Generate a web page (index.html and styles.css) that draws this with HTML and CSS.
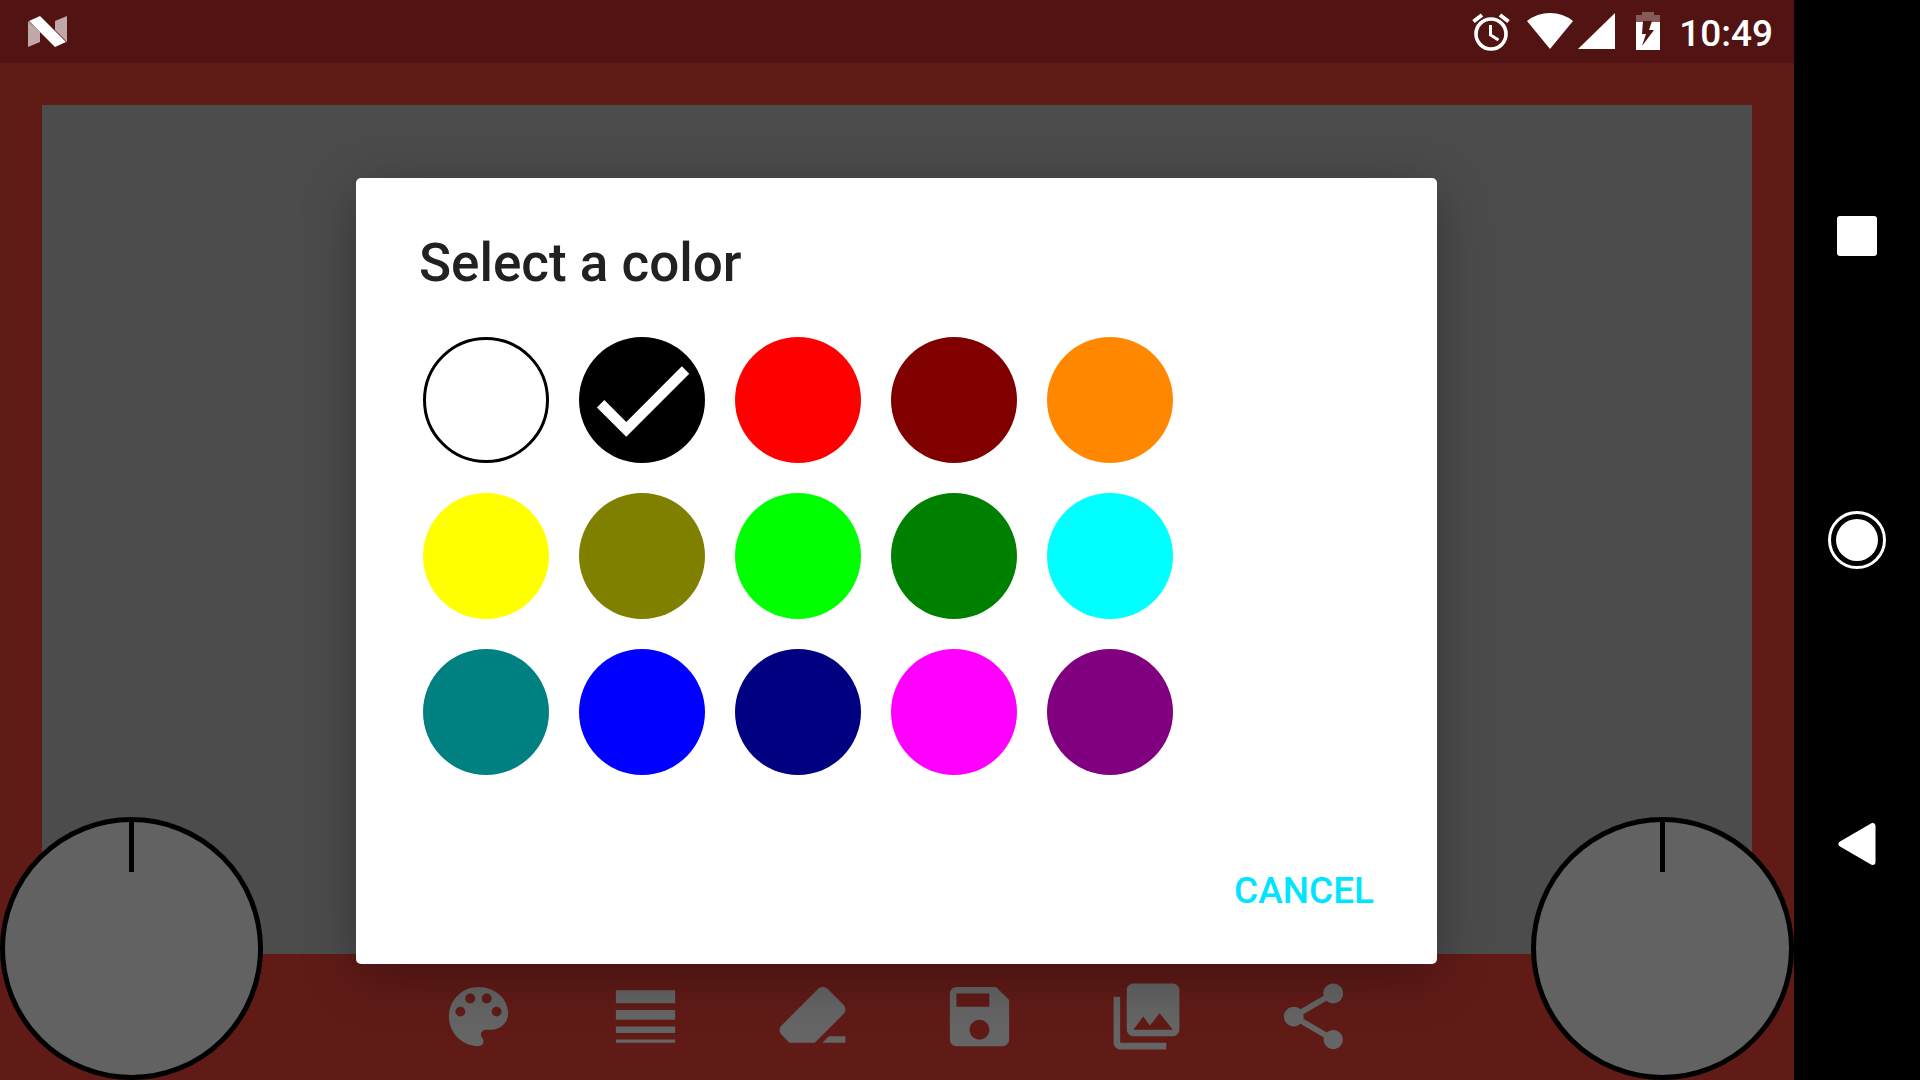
FILE: index.html
```html
<!DOCTYPE html>
<html lang="en">
<head>
<meta charset="utf-8">
<meta name="viewport" content="width=device-width, initial-scale=1">
<title>Select a color</title>
<link rel="stylesheet" href="styles.css">
</head>
<body>
<div class="device">
  <div class="app">
    <header class="status-bar">
      <svg class="logo" viewBox="0 0 39 31" aria-hidden="true">
        <path class="fold" d="M0 5 12 16V26L0 31ZM27 5 39 0V26L27 14Z"/>
        <path d="M1 5 12 0 38 26 27 31Z"/>
      </svg>
      <div class="indicators">
        <svg class="alarm" viewBox="0 0 38 39" aria-hidden="true">
          <circle cx="19" cy="22" r="15" fill="none" stroke="#fff" stroke-width="3.6"/>
          <path d="M18.5 13v10l8 5" fill="none" stroke="#fff" stroke-width="3"/>
          <path d="M1.5 9.5 10 3M28 3l8.500 6.500" fill="none" stroke="#fff" stroke-width="4"/>
        </svg>
        <svg class="wifi" viewBox="0 0 46 39" aria-hidden="true">
          <path d="M0 9Q10 1 23 1T46 9L23 37Z"/>
        </svg>
        <svg class="cell" viewBox="0 0 37 39" aria-hidden="true">
          <path d="M37 1V37H0Z"/>
        </svg>
        <svg class="battery" viewBox="0 0 24 39" aria-hidden="true">
          <path class="battery-empty" d="M6 0H18V3H24V10H0V3H6Z"/>
          <path d="M0 10H24V38H0Z"/>
          <path class="battery-bolt" d="M7 9H16L13 18H18L6 34 10 22H6Z"/>
        </svg>
        <time class="clock" datetime="10:49">10:49</time>
      </div>
    </header>

    <main class="canvas"></main>

    <footer class="toolbar">
      <button class="knob knob-left" type="button" aria-label="Horizontal knob"></button>
      <button class="tool" type="button" aria-label="Color"><svg viewBox="0 0 24 24"><path d="M12 3c-4.970 0-9 4.030-9 9s4.030 9 9 9c.83 0 1.500-.67 1.500-1.500 0-.39-.15-.74-.39-1.010-.23-.26-.38-.61-.38-.99 0-.83.67-1.500 1.500-1.500H16c2.760 0 5-2.240 5-5 0-4.420-4.030-8-9-8zm-5.500 9c-.83 0-1.500-.67-1.500-1.500S5.670 9 6.500 9 8 9.670 8 10.500 7.330 12 6.500 12zm3-4C8.670 8 8 7.330 8 6.500S8.670 5 9.500 5s1.500.67 1.500 1.500S10.330 8 9.500 8zm5 0c-.83 0-1.500-.67-1.500-1.500S13.670 5 14.500 5s1.500.67 1.500 1.500S15.330 8 14.500 8zm3 4c-.83 0-1.500-.67-1.500-1.500S16.670 9 17.500 9s1.500.67 1.500 1.500-.67 1.500-1.500 1.500z"/></svg></button>
      <button class="tool" type="button" aria-label="Line width"><svg viewBox="0 0 24 24"><path d="M3 4h18v4H3zM3 10h18v3H3zM3 15h18v2H3zM3 19h18v1H3z"/></svg></button>
      <button class="tool" type="button" aria-label="Erase"><svg viewBox="0 0 24 24"><path d="M15.140 3c-.51 0-1.020.2-1.410.59L2.590 14.730c-.78.77-.78 2.040 0 2.830L5.030 20h7.660l8.720-8.730c.79-.77.79-2.040 0-2.830l-4.850-4.850c-.39-.39-.91-.59-1.420-.59M17 18l-2 2h7v-2"/></svg></button>
      <button class="tool" type="button" aria-label="Save"><svg viewBox="0 0 24 24"><path d="M17 3H5c-1.110 0-2 .9-2 2v14c0 1.100.89 2 2 2h14c1.100 0 2-.9 2-2V7l-4-4zm-5 16c-1.660 0-3-1.340-3-3s1.340-3 3-3 3 1.340 3 3-1.340 3-3 3zm3-10H5V5h10v4z"/></svg></button>
      <button class="tool" type="button" aria-label="Gallery"><svg viewBox="0 0 24 24"><path d="M22 16V4a2 2 0 0 0-2-2H8a2 2 0 0 0-2 2v12a2 2 0 0 0 2 2h12a2 2 0 0 0 2-2M11 12l2.030 2.710L16 11l4 5H8M2 6v14a2 2 0 0 0 2 2h14v-2H4V6"/></svg></button>
      <button class="tool" type="button" aria-label="Share"><svg viewBox="0 0 24 24"><path d="M18 16.080c-.76 0-1.440.3-1.960.77L8.910 12.700c.05-.23.09-.46.09-.7s-.04-.47-.09-.7l7.050-4.110c.54.5 1.250.81 2.040.81 1.660 0 3-1.340 3-3s-1.340-3-3-3-3 1.340-3 3c0 .24.04.47.09.7L8.040 9.810C7.500 9.310 6.790 9 6 9c-1.660 0-3 1.340-3 3s1.340 3 3 3c.79 0 1.500-.31 2.040-.81l7.120 4.160c-.05.21-.08.43-.08.65 0 1.610 1.310 2.920 2.920 2.920s2.920-1.310 2.920-2.920-1.310-2.920-2.920-2.920z"/></svg></button>
      <button class="knob knob-right" type="button" aria-label="Vertical knob"></button>
    </footer>

    <div class="overlay">
      <section class="dialog" role="dialog" aria-modal="true" aria-labelledby="dialog-title">
        <h1 class="dialog-title" id="dialog-title">Select a color</h1>
        <div class="swatches" role="radiogroup" aria-labelledby="dialog-title">
          <label class="swatch"><input class="dot white" type="radio" name="color" aria-label="White"></label>
          <label class="swatch"><input class="dot black" type="radio" name="color" aria-label="Black" checked><svg class="check" viewBox="0 0 24 24" aria-hidden="true"><path d="M9 16.170 4.830 12l-1.420 1.410L9 19 21 7l-1.410-1.410z"/></svg></label>
          <label class="swatch"><input class="dot red" type="radio" name="color" aria-label="Red"></label>
          <label class="swatch"><input class="dot maroon" type="radio" name="color" aria-label="Maroon"></label>
          <label class="swatch"><input class="dot orange" type="radio" name="color" aria-label="Orange"></label>
          <label class="swatch"><input class="dot yellow" type="radio" name="color" aria-label="Yellow"></label>
          <label class="swatch"><input class="dot olive" type="radio" name="color" aria-label="Olive"></label>
          <label class="swatch"><input class="dot lime" type="radio" name="color" aria-label="Lime"></label>
          <label class="swatch"><input class="dot green" type="radio" name="color" aria-label="Green"></label>
          <label class="swatch"><input class="dot cyan" type="radio" name="color" aria-label="Cyan"></label>
          <label class="swatch"><input class="dot teal" type="radio" name="color" aria-label="Teal"></label>
          <label class="swatch"><input class="dot blue" type="radio" name="color" aria-label="Blue"></label>
          <label class="swatch"><input class="dot navy" type="radio" name="color" aria-label="Navy"></label>
          <label class="swatch"><input class="dot magenta" type="radio" name="color" aria-label="Magenta"></label>
          <label class="swatch"><input class="dot purple" type="radio" name="color" aria-label="Purple"></label>
        </div>
        <div class="dialog-actions">
          <button class="cancel" type="button">CANCEL</button>
        </div>
      </section>
    </div>
  </div>

  <nav class="nav-bar" aria-label="System navigation">
    <button class="nav-button" type="button" aria-label="Recent apps"><svg viewBox="0 0 60 60"><rect x="10" y="10" width="40" height="40" rx="3"/></svg></button>
    <button class="nav-button" type="button" aria-label="Home"><svg viewBox="0 0 60 60"><circle cx="30" cy="30" r="27.500" fill="none" stroke="#fff" stroke-width="3"/><circle cx="30" cy="30" r="21"/></svg></button>
    <button class="nav-button" type="button" aria-label="Back"><svg viewBox="0 0 60 60"><path d="M14.500 30 45.500 12V48Z" stroke="#fff" stroke-width="6" stroke-linejoin="round"/></svg></button>
  </nav>
</div>
</body>
</html>
```

FILE: styles.css
```css
* {
  box-sizing: border-box;
}

body {
  margin: 0;
  font-family: Roboto, "Liberation Sans", sans-serif;
}

button {
  margin: 0;
  padding: 0;
  border: 0;
  background: none;
  font: inherit;
  cursor: pointer;
}

svg {
  display: block;
  fill: #fff;
}

.device {
  display: flex;
  min-height: 100vh;
  background: #000;
}

/* Application area */
.app {
  position: relative;
  flex: 1;
  display: flex;
  flex-direction: column;
  background: #611b17;
}

.status-bar {
  display: flex;
  align-items: center;
  justify-content: space-between;
  height: 63px;
  padding: 0 21px 0 28px;
  background: #521313;
}

.logo {
  width: 39px;
  height: 31px;
}

.fold {
  fill: #c0a8a8;
}

.indicators {
  display: flex;
  align-items: center;
}

.indicators svg {
  height: 39px;
}

.alarm {
  width: 38px;
  margin-right: 17px;
}

.wifi {
  width: 46px;
  margin-right: 5px;
}

.cell {
  width: 37px;
  margin-right: 21px;
}

.battery {
  width: 24px;
  margin-right: 19px;
}

.battery-empty {
  fill: #875a5a;
}

.battery-bolt {
  fill: #521313;
}

.clock {
  padding-top: 4px;
  color: #fff;
  font-size: 37px;
  font-weight: 500;
  line-height: 44px;
}

.canvas {
  flex: 1;
  margin: 42px 42px 0;
  background: #4c4c4c;
}

.toolbar {
  position: relative;
  display: flex;
  align-items: center;
  justify-content: center;
  gap: 88px;
  height: 126px;
  padding: 0 2px 2px 0;
}

.tool svg {
  width: 79px;
  height: 79px;
  fill: #656565;
}

.knob {
  position: absolute;
  bottom: 0;
  width: 263px;
  height: 263px;
  border: 5px solid #000;
  border-radius: 50%;
  background: linear-gradient(#000, #000) top center / 5px 50px no-repeat #626262;
}

.knob-left {
  left: 0;
}

.knob-right {
  right: 0;
}

/* Color dialog */
.overlay {
  position: absolute;
  inset: 63px 1px 1px 0;
  display: grid;
  place-items: center;
}

.dialog {
  width: 60.3%;
  min-width: 888px;
  padding: 54px 63px 31px;
  border-radius: 5px;
  background: #fff;
  box-shadow: 0 12px 56px rgba(0, 0, 0, 0.32);
}

.dialog-title {
  margin: 0 0 43px;
  color: #212121;
  font-size: 53px;
  font-weight: 500;
  line-height: 62px;
}

.swatches {
  display: grid;
  grid-template-columns: repeat(5, 126px);
  gap: 30px;
  padding-left: 4px;
}

.swatch {
  display: grid;
  cursor: pointer;
}

.dot,
.check {
  grid-area: 1 / 1;
  width: 126px;
  height: 126px;
}

.dot {
  margin: 0;
  border-radius: 50%;
  appearance: none;
}

.white { border: 3px solid #000; background: #fff; }
.black { background: #000; }
.red { background: #f00; }
.maroon { background: #800000; }
.orange { background: #ff8800; }
.yellow { background: #ff0; }
.olive { background: #808000; }
.lime { background: #0f0; }
.green { background: #008000; }
.cyan { background: #0ff; }
.teal { background: #008080; }
.blue { background: #00f; }
.navy { background: #000080; }
.magenta { background: #f0f; }
.purple { background: #800080; }

.dialog-actions {
  display: flex;
  justify-content: flex-end;
  margin-top: 74px;
}

.cancel {
  padding: 20px 0;
  color: #00e5ff;
  font-size: 37px;
  font-weight: 500;
  line-height: 44px;
}

/* System navigation */
.nav-bar {
  display: flex;
  flex-direction: column;
  width: 126px;
  padding: 84px 0;
  background: #000;
}

.nav-button {
  flex: 1;
  display: grid;
  place-items: center;
}

.nav-button svg {
  width: 60px;
  height: 60px;
}
```
